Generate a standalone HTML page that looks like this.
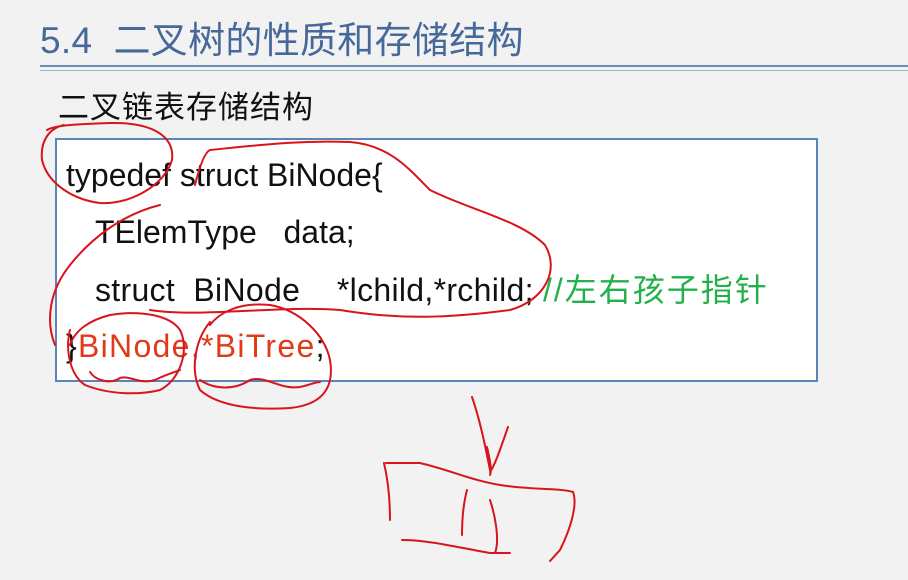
<!DOCTYPE html>
<html><head><meta charset="utf-8"><style>
html,body{margin:0;padding:0;width:908px;height:580px;overflow:hidden;background:#f2f2f2;font-family:"Liberation Sans","Noto Sans CJK SC",sans-serif;}
.t{position:absolute;left:40px;top:22px;font-size:37px;line-height:1;color:#46699a;white-space:nowrap;letter-spacing:0.3px}
.l1{position:absolute;left:40px;top:65px;width:868px;height:2px;background:#6d8cb5}
.l2{position:absolute;left:40px;top:70px;width:868px;height:1px;background:#9fb4cf}
.sub{position:absolute;left:58px;top:92px;font-size:31px;line-height:1;color:#111;white-space:nowrap;letter-spacing:1px}
.box{position:absolute;left:55px;top:138px;width:759px;height:240px;background:#fff;border:2px solid #5b84bb}
.c{position:absolute;font-size:32px;line-height:1;color:#111;white-space:pre;}
.r{color:#e03a18}.g{color:#22b04a;letter-spacing:2px}
svg{position:absolute;left:0;top:0}
</style></head><body>
<div class="t">5.4&nbsp; 二叉树的性质和存储结构</div>
<div class="l1"></div><div class="l2"></div>
<div class="sub">二叉链表存储结构</div>
<div class="box"></div>
<div class="c" style="left:66px;top:159px">typedef struct BiNode{</div>
<div class="c" style="left:95px;top:216px">TElemType   data;</div>
<div class="c" style="left:95px;top:274px;letter-spacing:0.3px">struct  BiNode    *lchild,*rchild; <span class="g">//左右孩子指针</span></div>
<div class="c" style="left:66px;top:330px;letter-spacing:1.3px">}<span class="r">BiNode,*BiTree</span>;</div>
<svg width="908" height="580" fill="none" stroke="#d8141c" stroke-width="2" stroke-linecap="round">
<path d="M64 125 C50 128 40 140 42 160 C48 185 75 200 100 203 C130 205 165 185 172 160 C175 135 150 122 110 123 C80 124 55 125 47 130"/>
<path d="M195 185 C200 165 205 152 210 150 C260 145 300 140 350 142 C390 145 410 170 430 190 C470 210 520 220 545 245 C560 270 545 300 510 310 C450 318 400 320 340 310 C280 305 200 318 150 310"/>
<path d="M160 205 C120 215 90 240 70 265 C50 290 45 320 55 345"/>
<path d="M70 330 C65 350 70 375 85 385 C110 395 140 395 160 390 C180 380 190 350 180 330 C170 315 140 310 110 315 C90 320 75 330 70 345"/>
<path d="M90 372 C95 380 110 385 120 378 C130 375 140 385 155 380 C165 375 175 372 180 370"/>
<path d="M210 322 C195 340 190 370 200 390 C220 408 260 410 290 408 C320 405 335 390 330 360 C325 335 300 310 270 305 C240 302 220 312 210 325"/>
<path d="M200 380 C215 390 235 390 250 380 C265 375 280 390 300 387 C310 385 315 382 320 382"/>
<path d="M472 397 C480 420 485 445 490 470 M487 447 C490 460 492 470 490 475 M508 427 C500 450 495 465 490 472"/>
<path d="M384 463 C388 480 390 500 390 520 M386 463 L420 463 C450 470 470 480 500 485 C530 490 560 488 573 492 C578 505 570 530 560 550 L550 561"/>
<path d="M467 490 C463 505 462 520 462 535 M490 500 C495 515 500 540 495 553 M402 540 C430 540 460 548 490 553 L510 553"/>
</svg>
</body></html>
